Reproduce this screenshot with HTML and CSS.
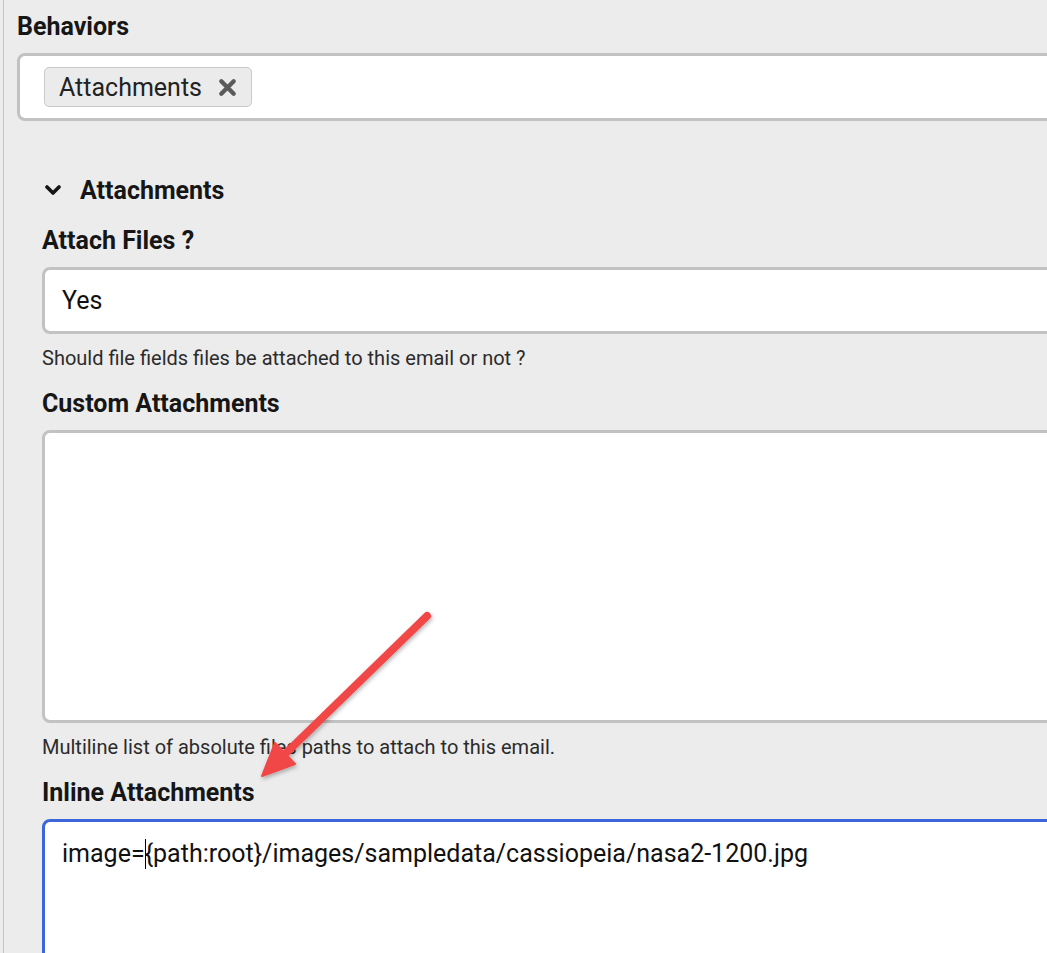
FILE: index.html
```html
<!DOCTYPE html>
<html lang="en">
  <head>
    <meta charset="UTF-8" />
    <meta name="viewport" content="width=device-width, initial-scale=1.0" />
    <title>Email Attachments</title>
    <link rel="stylesheet" href="styles.css">
  </head>
  <body>
    <div class="panel">
      <div class="control-group">
        <label class="control-label behaviors-label">Behaviors</label>
        <div class="choices">
          <span class="choice-item">
            Attachments
            <svg class="choice-remove" viewBox="0 0 20 20" width="19" height="19">
              <path d="M3.5 3.5 L16.5 16.5 M16.5 3.5 L3.5 16.5" stroke="#5a5a5a" stroke-width="4.6" stroke-linecap="round" />
            </svg>
          </span>
        </div>
      </div>

      <div class="fieldset">
        <div class="fieldset-toggle">
          <svg class="chevron" viewBox="0 0 16 10" width="16" height="10">
            <path d="M2 2 L8 8 L14 2" fill="none" stroke="#161616" stroke-width="3.6" stroke-linecap="round" stroke-linejoin="round" />
          </svg>
          <span>Attachments</span>
        </div>

        <label class="control-label">Attach Files ?</label>
        <div class="form-control select">Yes</div>
        <div class="help">Should file fields files be attached to this email or not ?</div>

        <label class="control-label">Custom Attachments</label>
        <div class="form-control textarea"></div>
        <div class="help">Multiline list of absolute files paths to attach to this email.</div>

        <label class="control-label">Inline Attachments</label>
        <div class="form-control textarea focused">image=<span class="caret"></span>{path:root}/images/sampledata/cassiopeia/nasa2-1200.jpg</div>
      </div>
    </div>

    <svg class="annotation" width="1047" height="953" viewBox="0 0 1047 953">
      <defs>
        <filter id="arrowShadow" x="-20%" y="-20%" width="140%" height="140%">
          <feDropShadow dx="1" dy="2" stdDeviation="2" flood-color="#000" flood-opacity="0.3" />
        </filter>
      </defs>
      <g filter="url(#arrowShadow)" fill="#f24646" stroke="#f24646">
        <line x1="427" y1="616" x2="284" y2="755" stroke-width="8" stroke-linecap="round" />
        <polygon points="262,776 275,743 295,764" stroke-width="2" stroke-linejoin="round" />
      </g>
    </svg>
  </body>
</html>
```

FILE: styles.css
```css
* {
  margin: 0;
  padding: 0;
  box-sizing: border-box;
}

body {
  font-family: Roboto, "Noto Sans", Arial, sans-serif;
  background: #ececec;
  color: #161616;
  overflow: hidden;
  height: 953px;
}

.panel {
  margin-left: 3px;
  margin-right: -40px;
  border-left: 1px solid #c4c4c4;
  padding: 12px 0 0 13px;
  height: 953px;
  overflow: hidden;
}

.control-label {
  display: block;
  font-size: 25px;
  font-weight: 700;
  line-height: 30px;
  margin-bottom: 11px;
}

.choices {
  background: #fff;
  border: 3px solid #c2c2c2;
  border-radius: 8px;
  height: 68px;
  padding: 11px 24px;
}

.choice-item {
  display: inline-flex;
  align-items: center;
  height: 40px;
  padding: 0 14px 0 14px;
  gap: 16px;
  background: #ebebeb;
  border: 1px solid #c9c9c9;
  border-radius: 5px;
  font-size: 25px;
  color: #222;
}

.fieldset {
  padding-left: 25px;
}

.fieldset-toggle {
  display: flex;
  align-items: center;
  gap: 19px;
  margin: 54px 0 21px 3px;
  height: 30px;
  font-size: 25px;
  font-weight: 700;
}

.form-control {
  background: #fff;
  border: 3px solid #c2c2c2;
  border-radius: 8px;
  font-size: 25px;
  color: #111;
}

.select {
  height: 67px;
  line-height: 61px;
  padding-left: 17px;
}

.textarea {
  height: 293px;
}

.focused {
  border-color: #3d66dc;
  padding: 15px 17px;
  line-height: 34px;
  height: 200px;
}

.caret {
  display: inline-block;
  width: 1px;
  height: 30px;
  background: #000;
  vertical-align: -7px;
  margin-right: -1px;
}

.help {
  font-size: 20px;
  line-height: 24px;
  color: #2b2b2b;
  margin: 12px 0 19px;
}

.annotation {
  position: absolute;
  left: 0;
  top: 0;
  pointer-events: none;
}
```
